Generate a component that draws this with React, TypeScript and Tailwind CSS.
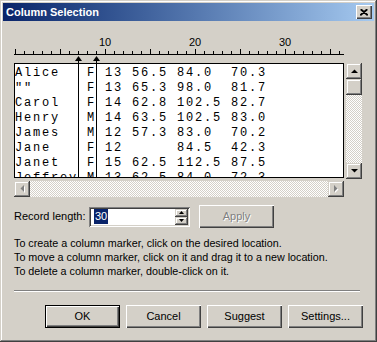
import React from 'react';

const raised = 'shadow-[inset_-1px_-1px_#404040,inset_1px_1px_#d4d0c8,inset_-2px_-2px_#808080,inset_2px_2px_#fff]';
const btn = 'shadow-[inset_1px_1px_#fff,inset_-1px_-1px_#404040,inset_-2px_-2px_#808080]';
const dither = 'bg-[repeating-conic-gradient(#d4d0c8_0_25%,#fff_0_50%)] bg-[length:2px_2px]';

const rows = [
  'Alice   F 13 56.5 84.0  70.3',
  '""      F 13 65.3 98.0  81.7',
  'Carol   F 14 62.8 102.5 82.7',
  'Henry   M 14 63.5 102.5 83.0',
  'James   M 12 57.3 83.0  70.2',
  'Jane    F 12      84.5  42.3',
  'Janet   F 15 62.5 112.5 87.5',
  'Jeffrey M 13 62.5 84.0  72.3',
];

type Dir = 'up' | 'down' | 'left' | 'right';

function Arrow({ dir, disabled }: { dir: Dir; disabled?: boolean }) {
  const pts: Record<Dir, string> = {
    up: '0,4 7,4 3.5,0.5',
    down: '0,0 7,0 3.5,3.5',
    left: '4,0 4,7 0.5,3.5',
    right: '0,0 0,7 3.5,3.5',
  };
  const vert = dir === 'up' || dir === 'down';
  return (
    <svg width={vert ? 7 : 5} height={vert ? 4 : 8} className="block">
      {disabled && <polygon points={pts[dir]} fill="#fff" transform="translate(1,1)" />}
      <polygon points={pts[dir]} fill={disabled ? '#808080' : '#000'} />
    </svg>
  );
}

function ScrollBtn({ dir, disabled }: { dir: Dir; disabled?: boolean }) {
  return (
    <div className={`w-[16px] h-[16px] shrink-0 bg-[#d4d0c8] flex items-center justify-center ${raised}`}>
      <Arrow dir={dir} disabled={disabled} />
    </div>
  );
}

function Button({ label, primary }: { label: string; primary?: boolean }) {
  return (
    <button
      className={`w-[75px] h-[23px] bg-[#d4d0c8] text-[11px] text-black flex items-center justify-center ${btn} ${
        primary ? 'border border-black' : ''
      }`}
    >
      {label}
    </button>
  );
}

function Ruler() {
  const ticks = Array.from({ length: 37 }, (_, i) => i);
  return (
    <svg width={331} height={29} className="block">
      {[10, 20, 30].map((n) => (
        <text key={n} x={1 + 9 * n} y={12} fontSize={11} textAnchor="middle" fontFamily="Liberation Sans, Arial, sans-serif" fill="#000">
          {n}
        </text>
      ))}
      <line x1={0} x2={330} y1={20.5} y2={20.5} stroke="#000" />
      {ticks.map((i) => (
        <line key={i} x1={1.5 + 9 * i} x2={1.5 + 9 * i} y1={i % 5 === 0 ? 15 : 17} y2={20} stroke="#000" />
      ))}
      {[64, 82].map((x) => (
        <g key={x}>
          <polygon points={`${x - 3},27 ${x + 4},27 ${x + 0.5},22`} fill="#000" />
          <line x1={x + 0.5} x2={x + 0.5} y1={26} y2={29} stroke="#000" />
        </g>
      ))}
    </svg>
  );
}

export default function App() {
  return (
    <div
      className="w-[377px] h-[342px] bg-[#d4d0c8] p-[3px] flex flex-col shadow-[inset_-1px_-1px_#404040,inset_1px_1px_#d4d0c8,inset_-2px_-2px_#808080,inset_2px_2px_#fff]"
      style={{ fontFamily: '"Liberation Sans", Arial, sans-serif' }}
    >
      {/* Title bar */}
      <div className="h-[18px] shrink-0 bg-gradient-to-r from-[#0a246a] to-[#a6caf0] flex items-center justify-between pl-[3px] pr-[2px]">
        <span className="text-white font-bold text-[11px] leading-none">Column Selection</span>
        <div className={`w-[16px] h-[14px] bg-[#d4d0c8] flex items-center justify-center ${btn}`}>
          <svg width={8} height={7} className="block">
            <path d="M0.5 0.5 L7.5 6.5 M1.5 0.5 L8 6 M7.5 0.5 L0.5 6.5 M6.5 0.5 L0 6" stroke="#000" strokeWidth={1.2} />
          </svg>
        </div>
      </div>

      <div className="flex flex-col px-[11px]">
        <div className="mt-[13px]">
          <Ruler />
        </div>

        {/* Data view with scrollbars */}
        <div className="flex gap-[2px]">
          <div className="flex flex-col">
            <div className="relative w-[330px] h-[115px] bg-white border border-black overflow-hidden pt-[2px]">
              {rows.map((r) => (
                <div
                  key={r}
                  className="h-[15px] leading-[15px] text-[12px] tracking-[1.8px] whitespace-pre text-black"
                  style={{ fontFamily: '"Liberation Mono", "Courier New", monospace' }}
                >
                  {r}
                </div>
              ))}
              <div className="absolute top-0 bottom-0 left-[63px] w-px bg-black" />
              <div className="absolute top-0 bottom-0 left-[81px] w-px bg-black" />
            </div>
            <div className="mt-[3px] flex h-[16px] w-[330px]">
              <ScrollBtn dir="left" disabled />
              <div className={`flex-1 ${dither}`} />
              <ScrollBtn dir="right" disabled />
            </div>
          </div>
          <div className="flex flex-col h-[116px] w-[16px]">
            <ScrollBtn dir="up" />
            <div className={`h-[16px] bg-[#d4d0c8] ${raised}`} />
            <div className={`flex-1 ${dither}`} />
            <ScrollBtn dir="down" />
          </div>
        </div>

        {/* Record length */}
        <div className="mt-[8px] flex items-center h-[23px]">
          <span className="w-[75px] text-[11px] text-black">Record length:</span>
          <div className="w-[101px] h-[20px] bg-white flex items-center justify-between pl-[5px] pr-[2px] shadow-[inset_1px_1px_#808080,inset_-1px_-1px_#fff,inset_2px_2px_#404040,inset_-2px_-2px_#d4d0c8]">
            <span className="bg-[#0a246a] text-white text-[11px] leading-[15px] px-px">30</span>
            <div className="flex flex-col w-[13px]">
              <div className={`h-[8px] bg-[#d4d0c8] flex items-center justify-center ${raised}`}>
                <svg width={5} height={3} className="block">
                  <polygon points="0,3 5,3 2.5,0" fill="#000" />
                </svg>
              </div>
              <div className={`h-[8px] bg-[#d4d0c8] flex items-center justify-center ${raised}`}>
                <svg width={5} height={3} className="block">
                  <polygon points="0,0 5,0 2.5,3" fill="#000" />
                </svg>
              </div>
            </div>
          </div>
          <div className={`ml-[9px] w-[75px] h-[23px] bg-[#d4d0c8] flex items-center justify-center text-[11px] text-[#808080] [text-shadow:1px_1px_#fff] ${btn}`}>
            Apply
          </div>
        </div>

        {/* Help */}
        <div className="mt-[8px] text-[10.75px] leading-[14px] text-black">
          <p>To create a column marker, click on the desired location.</p>
          <p>To move a column marker, click on it and drag it to a new location.</p>
          <p>To delete a column marker, double-click on it.</p>
        </div>

        <div className="mt-[12px] w-[346px] h-[2px] border-t border-[#808080] border-b border-b-white" />

        <div className="mt-[13px] flex justify-end gap-[6px]">
          <Button label="OK" primary />
          <Button label="Cancel" />
          <Button label="Suggest" />
          <Button label="Settings..." />
        </div>
      </div>
    </div>
  );
}
